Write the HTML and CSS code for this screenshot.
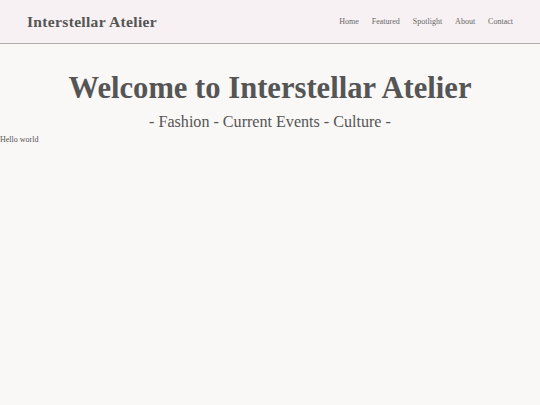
FILE: index.html
```html
<!DOCTYPE html>
<html lang="en">
<head>
<meta charset="utf-8">
<title>Interstellar Atelier</title>
<link rel="stylesheet" href="styles.css">
</head>
<body>
<header class="site-header">
  <div class="brand">Interstellar Atelier</div>
  <nav class="nav">
    <a href="#">Home</a>
    <a href="#">Featured</a>
    <a href="#">Spotlight</a>
    <a href="#">About</a>
    <a href="#">Contact</a>
  </nav>
</header>
<section class="hero">
  <h1 class="hero-title">Welcome to Interstellar Atelier</h1>
  <p class="hero-sub">- Fashion - Current Events - Culture -</p>
</section>
<p class="hello">Hello world</p>
</body>
</html>
```
FILE: styles.css
```css
html, body {
  margin: 0;
  padding: 0;
}
body {
  background: #f9f8f7;
  color: #555;
  font-family: "Liberation Serif", "DejaVu Serif", serif;
  min-height: 405px;
}
.site-header {
  display: flex;
  align-items: center;
  justify-content: space-between;
  height: 43px;
  padding: 0 27px;
  background: #f8f1f3;
  border-bottom: 1px solid #b3adab;
}
.brand {
  font-size: 15.6px;
  font-weight: bold;
  color: #555;
  letter-spacing: 0.3px;
}
.nav {
  display: flex;
  gap: 13px;
}
.nav a,
.nav a:visited {
  font-size: 8px;
  color: #666;
  text-decoration: none;
}
.hero {
  text-align: center;
  padding-top: 26px;
}
.hero-title {
  margin: 0;
  font-size: 30.6px;
  font-weight: bold;
  color: #555;
  line-height: 36px;
}
.hero-sub {
  margin: 5px 0 0;
  font-size: 16.1px;
  color: #555;
  line-height: 22px;
}
.hello {
  margin: 2px 0 0;
  font-size: 8px;
  color: #555;
}
```
